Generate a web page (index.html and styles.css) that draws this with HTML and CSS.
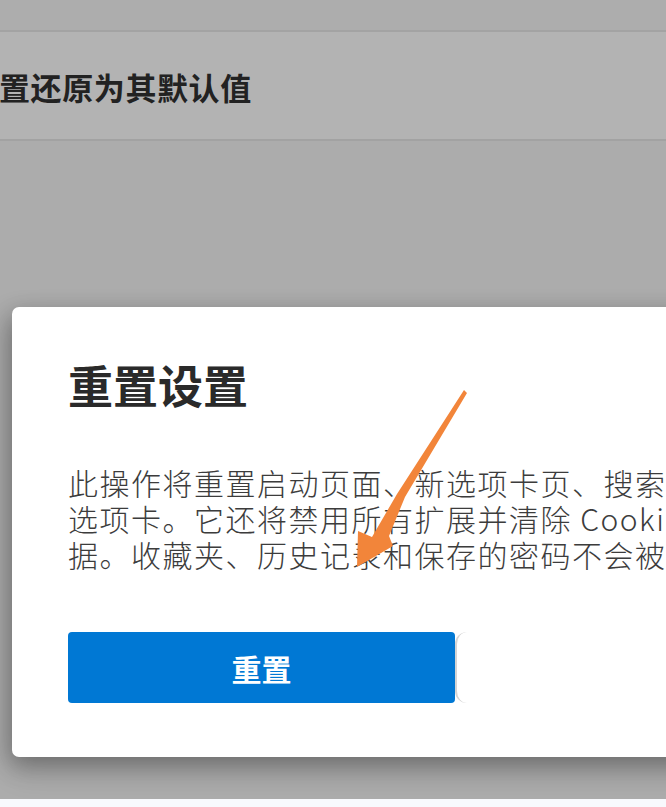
FILE: index.html
```html
<!DOCTYPE html>
<html lang="zh-CN">
<head>
<meta charset="utf-8">
<title>重置设置</title>
<link rel="stylesheet" href="styles.css">
</head>
<body>
<div class="page">
  <div class="topband"></div>
  <div class="setting-row">
    <span class="setting-label">置还原为其默认值</span>
  </div>
  <div class="overlay-area">
    <div class="dialog">
      <h1 class="dialog-title">重置设置</h1>
      <p class="dialog-body">
        <span class="line">此操作将重置启动页面、新选项卡页、搜索引擎和固定的</span>
        <span class="line">选项卡。它还将禁用所有扩展并清除 Cookie 等临时数</span>
        <span class="line">据。收藏夹、历史记录和保存的密码不会被清除。</span>
      </p>
      <div class="actions">
        <button class="btn-primary">重置</button>
        <button class="btn-secondary">取消</button>
      </div>
    </div>
  </div>
  <div class="footer-strip"></div>
</div>
<svg class="arrow" width="666" height="807" viewBox="0 0 666 807">
  <path d="M464 390 L467 393 L405 497 L389 536 L393 546 L357 567 L358 531 L372 537 L397 494 Z" fill="#f2853a"/>
</svg>
</body>
</html>
```
FILE: styles.css
```css
html, body {
  margin: 0;
  padding: 0;
}
body {
  width: 666px;
  height: 807px;
  overflow: hidden;
  background: #acacac;
  font-family: "Noto Sans CJK SC", "Noto Sans", sans-serif;
  position: relative;
}
.page {
  display: flex;
  flex-direction: column;
  height: 807px;
}
.topband {
  height: 32px;
  box-sizing: border-box;
  background: #adadad;
  border-bottom: 2px solid #a3a3a3;
}
.setting-row {
  height: 109px;
  box-sizing: border-box;
  background: #b3b3b3;
  border-bottom: 2px solid #a2a2a2;
  display: flex;
  align-items: center;
  padding-top: 2px;
}
.setting-label {
  font-size: 31px;
  font-weight: 700;
  color: #222;
  line-height: 1;
  margin-left: -1px;
  letter-spacing: 0.6px;
}
.overlay-area {
  flex: 1;
  padding-top: 166px;
  padding-left: 12px;
}
.dialog {
  width: 720px;
  height: 450px;
  box-sizing: border-box;
  background: #fff;
  border-radius: 7px;
  box-shadow: -3px 8px 24px rgba(0,0,0,0.3), 0 14px 32px rgba(0,0,0,0.12);
  padding: 51px 0 0 56px;
}
.dialog-title {
  margin: 0;
  font-size: 45px;
  line-height: 54px;
  font-weight: 700;
  color: #2a2a2a;
}
.dialog-body {
  margin: 52px 0 0 0;
  font-size: 30px;
  line-height: 36px;
  font-weight: 300;
  color: #3c3c3c;
  letter-spacing: 1.5px;
}
.line {
  display: block;
  white-space: nowrap;
}
.actions {
  margin-top: 60px;
  display: flex;
}
.btn-primary {
  width: 387px;
  height: 71px;
  border: none;
  border-radius: 4px;
  background: #0078d4;
  color: #fff;
  font-family: inherit;
  font-size: 30px;
  font-weight: 700;
  padding: 0;
}
.btn-secondary {
  width: 120px;
  height: 71px;
  border: none;
  border-left: 2px solid #d4d4d4;
  border-radius: 12px 0 0 12px;
  background: #fff;
  color: transparent;
  font-family: inherit;
  font-size: 30px;
  padding: 0;
}
.footer-strip {
  height: 8px;
  background: #f8f9fd;
}
.arrow {
  position: absolute;
  left: 0;
  top: 0;
  pointer-events: none;
}
```
